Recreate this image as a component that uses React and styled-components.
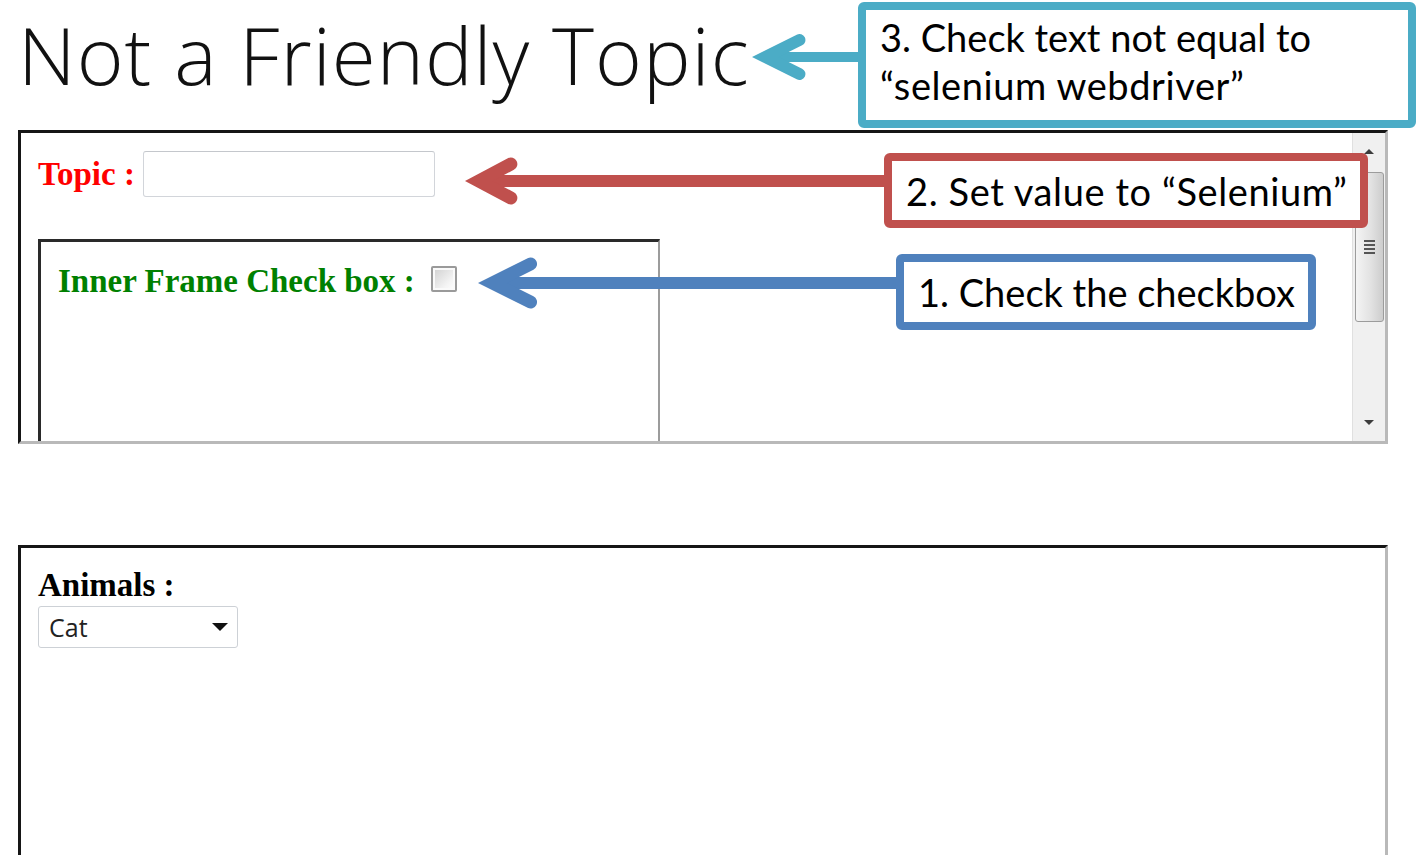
import styled, { createGlobalStyle } from 'styled-components'

const GlobalStyle = createGlobalStyle`
  html, body {
    margin: 0;
    padding: 0;
    background: #fff;
  }
  body {
    overflow: hidden;
  }
`

const TEAL = '#4BACC6'
const RED = '#C0504D'
const BLUE = '#4F81BD'

function Arrow({ color, width, height, y, head, spread, stroke = 13, shaft = 12 }) {
  const pad = 2
  const miter = stroke / 2 / Math.sin(Math.atan(spread / head))
  const vx = pad + miter
  return (
    <ArrowSvg width={width} height={height} viewBox={`0 0 ${width} ${height}`}>
      <line x1={vx} y1={y} x2={width} y2={y} stroke={color} strokeWidth={shaft} />
      <polyline
        points={`${vx + head},${y - spread} ${vx},${y} ${vx + head},${y + spread}`}
        fill="none"
        stroke={color}
        strokeWidth={stroke}
        strokeLinecap="round"
        strokeLinejoin="miter"
        strokeMiterlimit="10"
      />
    </ArrowSvg>
  )
}

function Note({ color, top, left, arrow, box, children }) {
  return (
    <Annotation $top={top} $left={left}>
      <Arrow color={color} {...arrow} />
      <Callout $color={color} $w={box.w} $h={box.h} $pb={box.pb}>
        {children}
      </Callout>
    </Annotation>
  )
}

export default function App() {
  return (
    <>
      <GlobalStyle />
      <Page>
        <Header>
          <Title>Not a Friendly Topic</Title>
        </Header>

        <Frame $height={314}>
          <FrameBody>
            <TopicRow>
              <Label $color="#ff0000">Topic :</Label>
              <TextInput type="text" />
            </TopicRow>
            <InnerFrame>
              <CheckRow>
                <Label $color="#008000">Inner Frame Check box :</Label>
                <Checkbox type="checkbox" />
              </CheckRow>
            </InnerFrame>
          </FrameBody>
          <Scrollbar>
            <ScrollButton>
              <ScrollArrow />
            </ScrollButton>
            <Thumb>
              <Grip />
              <Grip />
              <Grip />
              <Grip />
            </Thumb>
            <ScrollSpace />
            <ScrollButton>
              <ScrollArrow $down />
            </ScrollButton>
          </Scrollbar>
        </Frame>

        <Frame $height={320} $gap={101}>
          <FrameBody $top={19}>
            <Label $color="#000">Animals :</Label>
            <SelectBox>
              <span>Cat</span>
              <Caret />
            </SelectBox>
          </FrameBody>
        </Frame>

        <Note
          color={TEAL}
          top={2}
          left={750}
          arrow={{ width: 112, height: 126, y: 55, head: 34, spread: 17, stroke: 12, shaft: 10 }}
          box={{ w: 558, h: 126, pb: 8 }}
        >
          <span>3. Check text not equal to</span>
          <WideLine>“selenium webdriver”</WideLine>
        </Note>

        <Note
          color={RED}
          top={153}
          left={463}
          arrow={{ width: 425, height: 75, y: 28, head: 32, spread: 17 }}
          box={{ w: 484, h: 75 }}
        >
          <WideLine>2. Set value to “Selenium”</WideLine>
        </Note>

        <Note
          color={BLUE}
          top={254}
          left={476}
          arrow={{ width: 424, height: 76, y: 29, head: 38, spread: 19 }}
          box={{ w: 420, h: 76 }}
        >
          <span>1. Check the checkbox</span>
        </Note>
      </Page>
    </>
  )
}

const Page = styled.div`
  position: relative;
  width: 1418px;
  height: 855px;
  overflow: hidden;
  padding-left: 18px;
  box-sizing: border-box;
`

const Header = styled.div`
  height: 130px;
  display: flex;
  align-items: flex-start;
`

const Title = styled.h1`
  margin: 0;
  padding-top: 0;
  font-family: "Open Sans", sans-serif;
  font-weight: 300;
  font-size: 80px;
  line-height: 108px;
  letter-spacing: 1px;
  color: #111;
  white-space: nowrap;
`

const Frame = styled.div`
  box-sizing: border-box;
  width: 1370px;
  height: ${(p) => p.$height}px;
  margin-top: ${(p) => p.$gap || 0}px;
  border-style: solid;
  border-width: 3px;
  border-color: #161616 #b9b9b9 #b9b9b9 #161616;
  display: flex;
  overflow: hidden;
`

const FrameBody = styled.div`
  flex: 1;
  min-width: 0;
  overflow: hidden;
  padding: ${(p) => p.$top || 0}px 0 0 17px;
`

const TopicRow = styled.div`
  display: flex;
  align-items: center;
  gap: 8px;
  height: 46px;
  margin-top: 18px;
`

const Label = styled.div`
  font-family: "Liberation Serif", serif;
  font-weight: bold;
  font-size: 33px;
  line-height: 36px;
  color: ${(p) => p.$color};
  white-space: nowrap;
`

const TextInput = styled.input`
  box-sizing: border-box;
  width: 292px;
  height: 46px;
  margin: 0;
  border: 1px solid #d2d5da;
  border-top-color: #c4c7cc;
  border-radius: 3px;
  background: #fff;
  outline: none;
`

const InnerFrame = styled.div`
  box-sizing: border-box;
  width: 622px;
  height: 240px;
  margin-top: 42px;
  border-style: solid;
  border-width: 3px 2px 2px 3px;
  border-color: #2a2a2a #9c9c9c #9c9c9c #2a2a2a;
  padding: 21px 0 0 17px;
`

const CheckRow = styled.div`
  display: flex;
  align-items: center;
  gap: 16px;
`

const Checkbox = styled.input`
  appearance: none;
  box-sizing: border-box;
  width: 26px;
  height: 26px;
  margin: 0 0 4px;
  border: 2px solid #9a9a9a;
  border-radius: 2px;
  background: linear-gradient(135deg, #cfcfcf, #f4f4f4 70%, #ffffff);
  box-shadow: inset 0 0 0 2px #fafafa;
`

const Scrollbar = styled.div`
  box-sizing: border-box;
  width: 33px;
  flex-shrink: 0;
  background: #f0f0f0;
  border-left: 1px solid #e0e0e0;
  display: flex;
  flex-direction: column;
`

const ScrollButton = styled.div`
  height: 37px;
  flex-shrink: 0;
  display: flex;
  align-items: center;
  justify-content: center;
`

const ScrollArrow = styled.span`
  width: 0;
  height: 0;
  border-left: 5px solid transparent;
  border-right: 5px solid transparent;
  ${(p) => (p.$down ? 'border-top: 5px solid #3c3c3c;' : 'border-bottom: 5px solid #3c3c3c;')}
`

const Thumb = styled.div`
  box-sizing: border-box;
  height: 150px;
  margin: 2px 1px 0 2px;
  border: 1px solid #9c9c9c;
  border-radius: 3px;
  background: linear-gradient(to right, #f4f4f4, #e2e2e2 55%, #cdcdcd);
  display: flex;
  flex-direction: column;
  align-items: center;
  justify-content: center;
  gap: 2px;
`

const Grip = styled.span`
  width: 11px;
  height: 2px;
  background: #555;
`

const ScrollSpace = styled.div`
  flex: 1;
`

const SelectBox = styled.div`
  box-sizing: border-box;
  width: 200px;
  height: 42px;
  margin-top: 3px;
  padding: 0 9px 0 10px;
  border: 1px solid #cdd1d6;
  border-radius: 3px;
  display: flex;
  align-items: center;
  justify-content: space-between;
  font-family: "Open Sans", sans-serif;
  font-size: 25px;
  color: #222;
`

const Caret = styled.span`
  width: 0;
  height: 0;
  border-left: 8px solid transparent;
  border-right: 8px solid transparent;
  border-top: 8px solid #111;
`

const Annotation = styled.div`
  position: absolute;
  top: ${(p) => p.$top}px;
  left: ${(p) => p.$left}px;
  display: flex;
  align-items: flex-start;
  z-index: 2;
`

const ArrowSvg = styled.svg`
  display: block;
  flex-shrink: 0;
  margin-right: -4px;
  overflow: visible;
`

const Callout = styled.div`
  position: relative;
  box-sizing: border-box;
  width: ${(p) => p.$w}px;
  height: ${(p) => p.$h}px;
  border: 8px solid ${(p) => p.$color};
  border-radius: 6px;
  background: #fff;
  padding: 0 14px ${(p) => p.$pb || 0}px;
  display: flex;
  flex-direction: column;
  justify-content: center;
  font-family: Lato, "Open Sans", sans-serif;
  font-size: 38px;
  line-height: 48px;
  color: #000;
  white-space: nowrap;
`

const WideLine = styled.span`
  letter-spacing: 0.6px;
`
